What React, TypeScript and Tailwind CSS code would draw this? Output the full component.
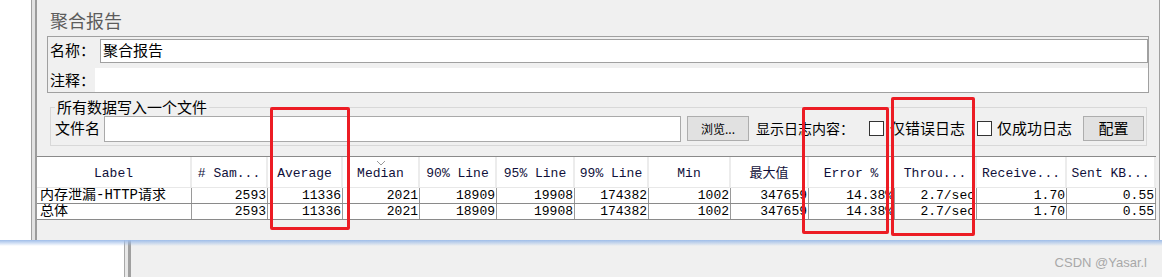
import React from 'react';

const ui = "font-['Microsoft_YaHei','Noto_Sans_CJK_SC',sans-serif]";
const mono = "font-['Liberation_Mono','Noto_Sans_CJK_SC',monospace]";

type Col = { name: string; w: number };

const columns: Col[] = [
  { name: 'Label', w: 155 },
  { name: '# Sam...', w: 76 },
  { name: 'Average', w: 75 },
  { name: 'Median', w: 77 },
  { name: '90% Line', w: 77 },
  { name: '95% Line', w: 78 },
  { name: '99% Line', w: 74 },
  { name: 'Min', w: 82 },
  { name: '最大值', w: 78 },
  { name: 'Error %', w: 86 },
  { name: 'Throu...', w: 82 },
  { name: 'Receive...', w: 90 },
  { name: 'Sent KB...', w: 89 },
];

const rows: string[][] = [
  ['内存泄漏-HTTP请求', '2593', '11336', '2021', '18909', '19908', '174382', '1002', '347659', '14.38%', '2.7/sec', '1.70', '0.55'],
  ['总体', '2593', '11336', '2021', '18909', '19908', '174382', '1002', '347659', '14.38%', '2.7/sec', '1.70', '0.55'],
];

const Checkbox = () => <span className="inline-block shrink-0 w-[15px] h-[15px] bg-white border border-[#333]" />;

const ResultsTable = () => (
  <div className={`${mono} text-[13px] border-t border-[#8a8a8a]`}>
    <div className="flex h-[31px] bg-white border-b border-[#e8e8e8]">
      {columns.map((c, i) => (
        <div
          key={c.name}
          style={{ width: c.w }}
          className="relative shrink-0 flex items-center justify-center pt-[4px] whitespace-nowrap text-[#10103a] border-r-2 border-[#ececec]"
        >
          {i === 3 && (
            <svg className="absolute left-[33px] top-[3px]" width="10" height="6" viewBox="0 0 10 6">
              <path d="M1 1 L5 5 L9 1" fill="none" stroke="#9a9a9a" strokeWidth="1" />
            </svg>
          )}
          {c.name}
        </div>
      ))}
    </div>
    {rows.map((r, ri) => (
      <div key={ri} className="flex h-[16px] bg-white border-b border-[#8a8a8a]">
        {r.map((v, ci) => (
          <div
            key={ci}
            style={{ width: columns[ci].w }}
            className={`shrink-0 overflow-hidden whitespace-nowrap leading-[15px] text-black border-r border-[#9a9a9a] ${
              ci === 0 ? 'pl-[3px] text-[14px] text-left' : 'pr-[1px] text-right'
            }`}
          >
            {v}
          </div>
        ))}
      </div>
    ))}
  </div>
);

export default function App() {
  return (
    <div className="relative w-[1162px] h-[277px] bg-white overflow-hidden">
      <div className="flex h-[240px]">
        <div className="w-[31px] bg-white" />
        <div className="w-px bg-[#a0a0a0]" />
        <div className="w-[3px] bg-[#e2e2e2]" />
        <div className="w-[2px] bg-[#9c9c9c]" />
        <div className="flex-1 bg-[#f0f0f0] pt-[8px]">
          <div className={`${ui} pl-[13px] text-[18px] leading-[24px] text-[#5c5c5c]`}>聚合报告</div>

          <div className={`${ui} ml-[10px] mt-[4px] w-[1102px] border border-[#a0a0a0] text-[15px] text-black`}>
            <div className="flex items-center h-[27px]">
              <span className="w-[52px] pl-[2px] shrink-0">名称：</span>
              <div className="flex-1 h-[24px] bg-white border border-[#a0a0a0] flex items-center pl-[2px]">聚合报告</div>
            </div>
            <div className="flex items-center h-[28px] pt-[4px]">
              <span className="w-[47px] pl-[2px] shrink-0">注释：</span>
              <div className="flex-1 h-[24px] bg-white" />
            </div>
          </div>

          <fieldset className={`${ui} ml-[13px] mt-[6px] w-[1097px] border border-[#d8d8d8] pb-[3px] text-[15px]`}>
            <legend className="ml-[4px] px-[2px] leading-[16px]">所有数据写入一个文件</legend>
            <div className="flex items-center h-[27px] pl-[4px] whitespace-nowrap">
              <span className="w-[49px] shrink-0">文件名</span>
              <div className="w-[577px] shrink-0 h-[26px] bg-white border border-[#a9a9a9]" />
              <button className="ml-[6px] shrink-0 w-[62px] h-[25px] bg-[#e1e1e1] border border-[#adadad] text-[12px]">浏览...</button>
              <span className="ml-[7px] shrink-0 text-[14px]">显示日志内容：</span>
              <span className="ml-[15px] shrink-0 flex items-center gap-[6px]"><Checkbox />仅错误日志</span>
              <span className="ml-[12px] shrink-0 flex items-center gap-[5px]"><Checkbox />仅成功日志</span>
              <button className="ml-[11px] shrink-0 w-[61px] h-[25px] bg-[#e1e1e1] border border-[#adadad]">配置</button>
            </div>
          </fieldset>

          <div className="mt-[10px] mr-[3px]">
            <ResultsTable />
          </div>
        </div>
        <div className="w-px bg-[#a0a0a0]" />
        <div className="w-[2px] bg-white" />
      </div>

      <div className="relative flex h-[37px]">
        <div className="w-[124px] bg-white" />
        <div className="w-px bg-[#a8a8a8]" />
        <div className="w-[3px] bg-[#e8e8e8]" />
        <div className="w-[3px] bg-[#a0a0a0]" />
        <div className="flex-1 bg-[#f0f0f0] flex items-start justify-end pr-[15px] pt-[13px]">
          <span className="font-['Liberation_Sans',sans-serif] text-[13px] text-[#a8a8a8]">CSDN @Yasar.l</span>
        </div>
        <div className="absolute top-0 left-0 right-0 h-[6px] bg-gradient-to-b from-[#9fbde9] to-transparent" />
      </div>

      <div className="absolute left-[270px] top-[107px] w-[80px] h-[123px] border-[3px] border-[#ec1c24] rounded-[2px]" />
      <div className="absolute left-[802px] top-[107px] w-[87px] h-[127px] border-[3px] border-[#ec1c24] rounded-[2px]" />
      <div className="absolute left-[891px] top-[97px] w-[84px] h-[139px] border-[3px] border-[#ec1c24] rounded-[2px]" />
    </div>
  );
}
